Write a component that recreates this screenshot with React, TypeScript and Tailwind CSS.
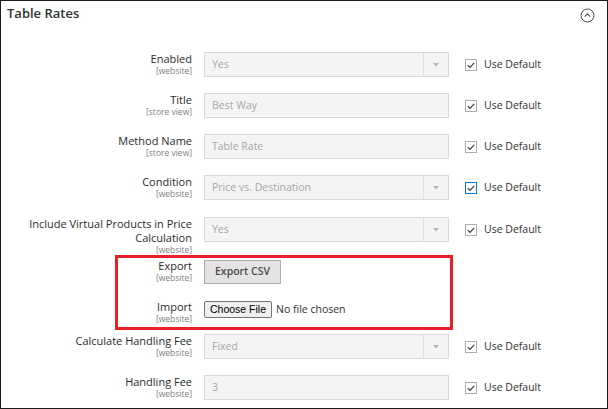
import React from "react";

type Row = {
  label: string[];
  scope: string;
  kind: "select" | "text";
  value: string;
  focused?: boolean;
  mt: string;
};

const rows: Row[] = [
  { label: ["Enabled"], scope: "[website]", kind: "select", value: "Yes", mt: "mt-0" },
  { label: ["Title"], scope: "[store view]", kind: "text", value: "Best Way", mt: "mt-[16px]" },
  { label: ["Method Name"], scope: "[store view]", kind: "text", value: "Table Rate", mt: "mt-[16px]" },
  {
    label: ["Condition"],
    scope: "[website]",
    kind: "select",
    value: "Price vs. Destination",
    focused: true,
    mt: "mt-[16px]",
  },
  {
    label: ["Include Virtual Products in Price", "Calculation"],
    scope: "[website]",
    kind: "select",
    value: "Yes",
    mt: "mt-[17px]",
  },
];

const lowerRows: Row[] = [
  { label: ["Calculate Handling Fee"], scope: "[website]", kind: "select", value: "Fixed", mt: "mt-[10px]" },
  { label: ["Handling Fee"], scope: "[website]", kind: "text", value: "3", mt: "mt-[16px]" },
];

const Label = ({ lines, scope }: { lines: string[]; scope: string }) => (
  <div className="w-[191px] shrink-0 pl-[20px] text-right">
    {lines.map((l) => (
      <div key={l} className="text-[11px] leading-[14px] text-[#2b2b2b]">
        {l}
      </div>
    ))}
    <div className="text-[8.5px] leading-[10px] text-[#808080]">{scope}</div>
  </div>
);

const Checkbox = ({ focused }: { focused?: boolean }) => (
  <svg width="12" height="12" viewBox="0 0 12 12" className="shrink-0">
    <rect
      x="0.5"
      y="0.5"
      width="11"
      height="11"
      fill="#fff"
      stroke={focused ? "#007bdb" : "#adadad"}
    />
    <path d="M2.8 6.1 L5 8.3 L9.2 3.8" fill="none" stroke="#41362f" strokeWidth="1.2" />
  </svg>
);

const Field = ({ row }: { row: Row }) => (
  <div className="flex items-center h-[25px] w-[245px] border border-[#d9d9d9] bg-[#f4f4f4]">
    <span className="flex-1 px-[7px] text-[10.5px] text-[#a6a6a6]">{row.value}</span>
    {row.kind === "select" && (
      <span className="flex h-full w-[25px] items-center justify-center border-l border-[#dedede]">
        <svg width="6" height="4" viewBox="0 0 6 4">
          <path d="M0 0 H6 L3 3.5 Z" fill="#b5b5b5" />
        </svg>
      </span>
    )}
  </div>
);

const FieldRow = ({ row }: { row: Row }) => (
  <div className={`flex items-start ${row.mt}`}>
    <Label lines={row.label} scope={row.scope} />
    <div className="ml-[12px] flex items-center">
      <Field row={row} />
      <div className="ml-[16px] flex items-center gap-[7px]">
        <Checkbox focused={row.focused} />
        <span className="text-[10.5px] text-[#303030]">Use Default</span>
      </div>
    </div>
  </div>
);

export default function App() {
  return (
    <div
      className="relative h-[409px] w-[608px] overflow-hidden border border-[#1b1b1b] bg-white"
      style={{ fontFamily: "'Open Sans', sans-serif" }}
    >
      {/* Section header */}
      <div className="flex h-[51px] items-start justify-between pl-[6px] pr-[12px] pt-[3px]">
        <h2 className="text-[13px] font-semibold leading-[18px] text-[#303030]">Table Rates</h2>
        <svg width="15" height="15" viewBox="0 0 15 15" className="mt-[4px]">
          <circle cx="7.5" cy="7.5" r="6.5" fill="none" stroke="#514943" strokeWidth="1" />
          <path d="M4.8 8.6 L7.5 5.9 L10.2 8.6" fill="none" stroke="#514943" strokeWidth="1.1" />
        </svg>
      </div>

      {rows.map((r) => (
        <FieldRow key={r.label.join(" ")} row={r} />
      ))}

      {/* Export */}
      <div className="mt-[4px] flex items-start">
        <Label lines={["Export"]} scope="[website]" />
        <button className="ml-[12px] mt-[1px] h-[24px] w-[77px] border border-[#adadad] bg-[#e3e3e3] text-[10.5px] font-semibold text-[#514943]">
          Export CSV
        </button>
      </div>

      {/* Import */}
      <div className="mt-[16px] flex items-start">
        <Label lines={["Import"]} scope="[website]" />
        <div className="ml-[12px] mt-[1px] flex items-center">
          <span
            className="flex h-[17px] w-[68px] items-center justify-center rounded-[2px] border border-[#767676] bg-[#efefef] text-[10.5px] text-black"
            style={{ fontFamily: "'Liberation Sans', Arial, sans-serif" }}
          >
            Choose File
          </span>
          <span className="ml-[4px] text-[10.5px] text-[#303030]">No file chosen</span>
        </div>
      </div>

      {lowerRows.map((r) => (
        <FieldRow key={r.label.join(" ")} row={r} />
      ))}

      {/* Highlight annotation */}
      <div className="pointer-events-none absolute left-[114px] top-[254px] h-[75px] w-[338px] border-[3px] border-[#e8202a]" />
    </div>
  );
}
